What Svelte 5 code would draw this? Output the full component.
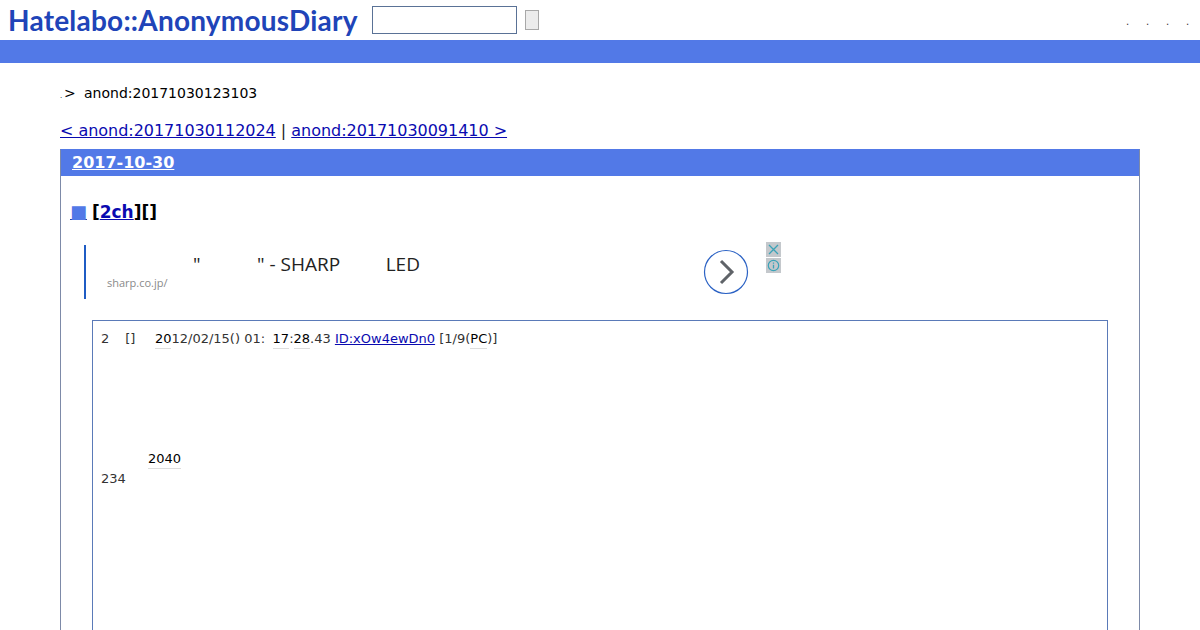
<script>
  const dots = [0, 1, 2, 3];
</script>

<div class="page">
  <header class="banner">
    <a class="logo" href="#top">Hatelabo::AnonymousDiary</a>
    <form class="search">
      <input class="search-box" type="text" />
      <button class="search-btn" type="button"></button>
    </form>
    <ul class="menu">
      {#each dots as d (d)}
        <li>.</li>
      {/each}
    </ul>
  </header>
  <div class="belt"></div>

  <main class="body">
    <p class="crumb"><span class="dot">.</span><span class="gt">&gt;</span><span>anond:20171030123103</span></p>
    <p class="pager">
      <a href="#prev">&lt; anond:20171030112024</a> | <a href="#next">anond:20171030091410 &gt;</a>
    </p>

    <section class="day">
      <h2 class="day-title"><a href="#day">2017-10-30</a></h2>
      <h3 class="entry-title">
        <a class="mark" href="#entry">■</a> [<a href="#2ch">2ch</a>][]
      </h3>

      <div class="ad">
        <div class="ad-text">
          <div class="ad-head"><span class="q1">"</span><span class="q2">"</span> - SHARP<span class="led">LED</span></div>
          <div class="ad-url">sharp.co.jp/</div>
        </div>
        <div class="ad-arrow">
          <svg width="46" height="46" viewBox="0 0 46 46">
            <circle cx="23" cy="23" r="21.5" fill="#fff" stroke="#2b62c4" stroke-width="1.2" />
            <path d="M18 12 L29 23 L18 34" fill="none" stroke="#5f6368" stroke-width="3" />
          </svg>
        </div>
        <div class="ad-flags">
          <svg width="15" height="15" viewBox="0 0 15 15">
            <rect width="15" height="15" fill="#c4c8cc" />
            <path d="M3 3 L12 12 M12 3 L3 12" stroke="#3aa3b8" stroke-width="1.3" />
          </svg>
          <svg width="15" height="15" viewBox="0 0 15 15">
            <rect width="15" height="15" fill="#c4c8cc" />
            <circle cx="7.5" cy="7.5" r="5.2" fill="none" stroke="#3aa3b8" stroke-width="1.2" />
            <path d="M7.5 4.5 V5.8 M7.5 6.8 V10.5" stroke="#3aa3b8" stroke-width="1.3" />
          </svg>
        </div>
      </div>

      <blockquote class="quote">
        <p class="meta">
          2<span class="gap-a"></span>[]<span class="gap-b"></span><span class="kw">20</span>12/02/15() 01:<span class="gap-c"></span><span class="kw">17</span>:<span class="kw">28</span>.43 <a href="#id">ID:xOw4ewDn0</a> [1/9(<span class="kw">PC</span>)]
        </p>
        <p class="line-a"><span class="kw">2040</span></p>
        <p class="line-b">234</p>
      </blockquote>
    </section>
  </main>
</div>

<style>
  :global(body) {
    margin: 0;
    background: #fff;
    color: #000;
    font-family: "DejaVu Sans", sans-serif;
  }
  .page {
    height: 630px;
    overflow: hidden;
  }
  .banner {
    display: flex;
    align-items: center;
    height: 40px;
    box-sizing: border-box;
    padding-left: 8px;
  }
  .logo {
    font-family: Lato, sans-serif;
    font-weight: 700;
    font-size: 28px;
    line-height: 38px;
    letter-spacing: 0.22px;
    color: #2044b8;
    text-decoration: none;
    width: 364px;
    white-space: nowrap;
  }
  .search {
    display: flex;
    align-items: center;
    gap: 8px;
  }
  .search-box {
    width: 145px;
    height: 28px;
    box-sizing: border-box;
    border: 1px solid #5a7296;
    padding: 0;
    background: #fff;
  }
  .search-btn {
    width: 14px;
    height: 20px;
    padding: 0;
    box-sizing: border-box;
    border: 1px solid #a8a8a8;
    border-radius: 0;
    background: #ececec;
  }
  .menu {
    display: flex;
    gap: 16px;
    list-style: none;
    margin: 4px 0 0 auto;
    padding: 0 10px 0 0;
    font-size: 10px;
    line-height: 14px;
    color: #333;
  }
  .menu li {
    width: 4px;
  }
  .belt {
    height: 23px;
    background: #5279e7;
  }
  .body {
    padding: 0 60px;
  }
  .crumb {
    display: flex;
    align-items: baseline;
    margin: 0;
    padding-top: 21px;
    height: 35px;
    font-size: 14px;
    line-height: 18px;
  }
  .dot {
    font-size: 7px;
    width: 4px;
  }
  .gt {
    width: 20px;
  }
  .pager {
    margin: 0;
    padding-top: 2px;
    height: 28px;
    font-size: 16px;
    line-height: 19px;
    letter-spacing: -0.03px;
    color: #222;
  }
  .pager a,
  .entry-title a,
  .meta a {
    color: #0a0ab0;
  }
  .day {
    height: 600px;
    border: 1px solid #5279e7;
    border-bottom: 0;
    border-left-color: #7d8aa8;
    border-right-color: #7d8aa8;
  }
  .day-title {
    margin: 0;
    height: 26px;
    padding-left: 11px;
    background: #5279e7;
    font-size: 16px;
    line-height: 25px;
    font-weight: 700;
  }
  .day-title a {
    color: #fff;
  }
  .entry-title {
    margin: 0;
    padding: 26px 0 0 10px;
    height: 43px;
    font-size: 17px;
    line-height: 20px;
    font-weight: 700;
  }
  .entry-title a.mark {
    color: #5279e7;
    font-size: 18px;
    text-decoration-color: #2a3f9a;
    margin: 0 -1px;
  }
  .ad {
    display: flex;
    margin-left: 23px;
    height: 54px;
  }
  .ad-text {
    width: 597px;
    border-left: 2px solid #1f5cc4;
    padding: 8px 0 0 21px;
    box-sizing: border-box;
    height: 54px;
  }
  .ad-head {
    font-family: "Open Sans", sans-serif;
    font-size: 19px;
    line-height: 22px;
    color: #222;
    white-space: nowrap;
    padding-left: 86px;
  }
  .q1 {
    display: inline-block;
    width: 64px;
  }
  .led {
    margin-left: 45.5px;
  }
  .ad-url {
    font-family: "Open Sans", sans-serif;
    font-size: 11px;
    line-height: 16px;
    color: #8a8a8a;
  }
  .ad-arrow {
    margin: 4px 0 0 22px;
    line-height: 0;
  }
  .ad-flags {
    display: flex;
    flex-direction: column;
    gap: 1px;
    margin: -3px 0 0 17px;
    line-height: 0;
  }
  .quote {
    margin: 21px 31px 0;
    height: 400px;
    border: 1px solid #5a7ab8;
    padding: 8px;
    font-size: 13px;
    line-height: 20px;
    color: #333;
  }
  .quote p {
    margin: 0;
  }
  .meta {
    white-space: nowrap;
  }
  .gap-a {
    display: inline-block;
    width: 16px;
  }
  .gap-b {
    display: inline-block;
    width: 19.5px;
  }
  .gap-c {
    display: inline-block;
    width: 7.5px;
  }
  .kw {
    color: #000;
    border-bottom: 1px solid #ddd;
    padding-bottom: 2px;
  }
  .quote .line-a {
    margin-top: 100px;
    padding-left: 47px;
  }
</style>
